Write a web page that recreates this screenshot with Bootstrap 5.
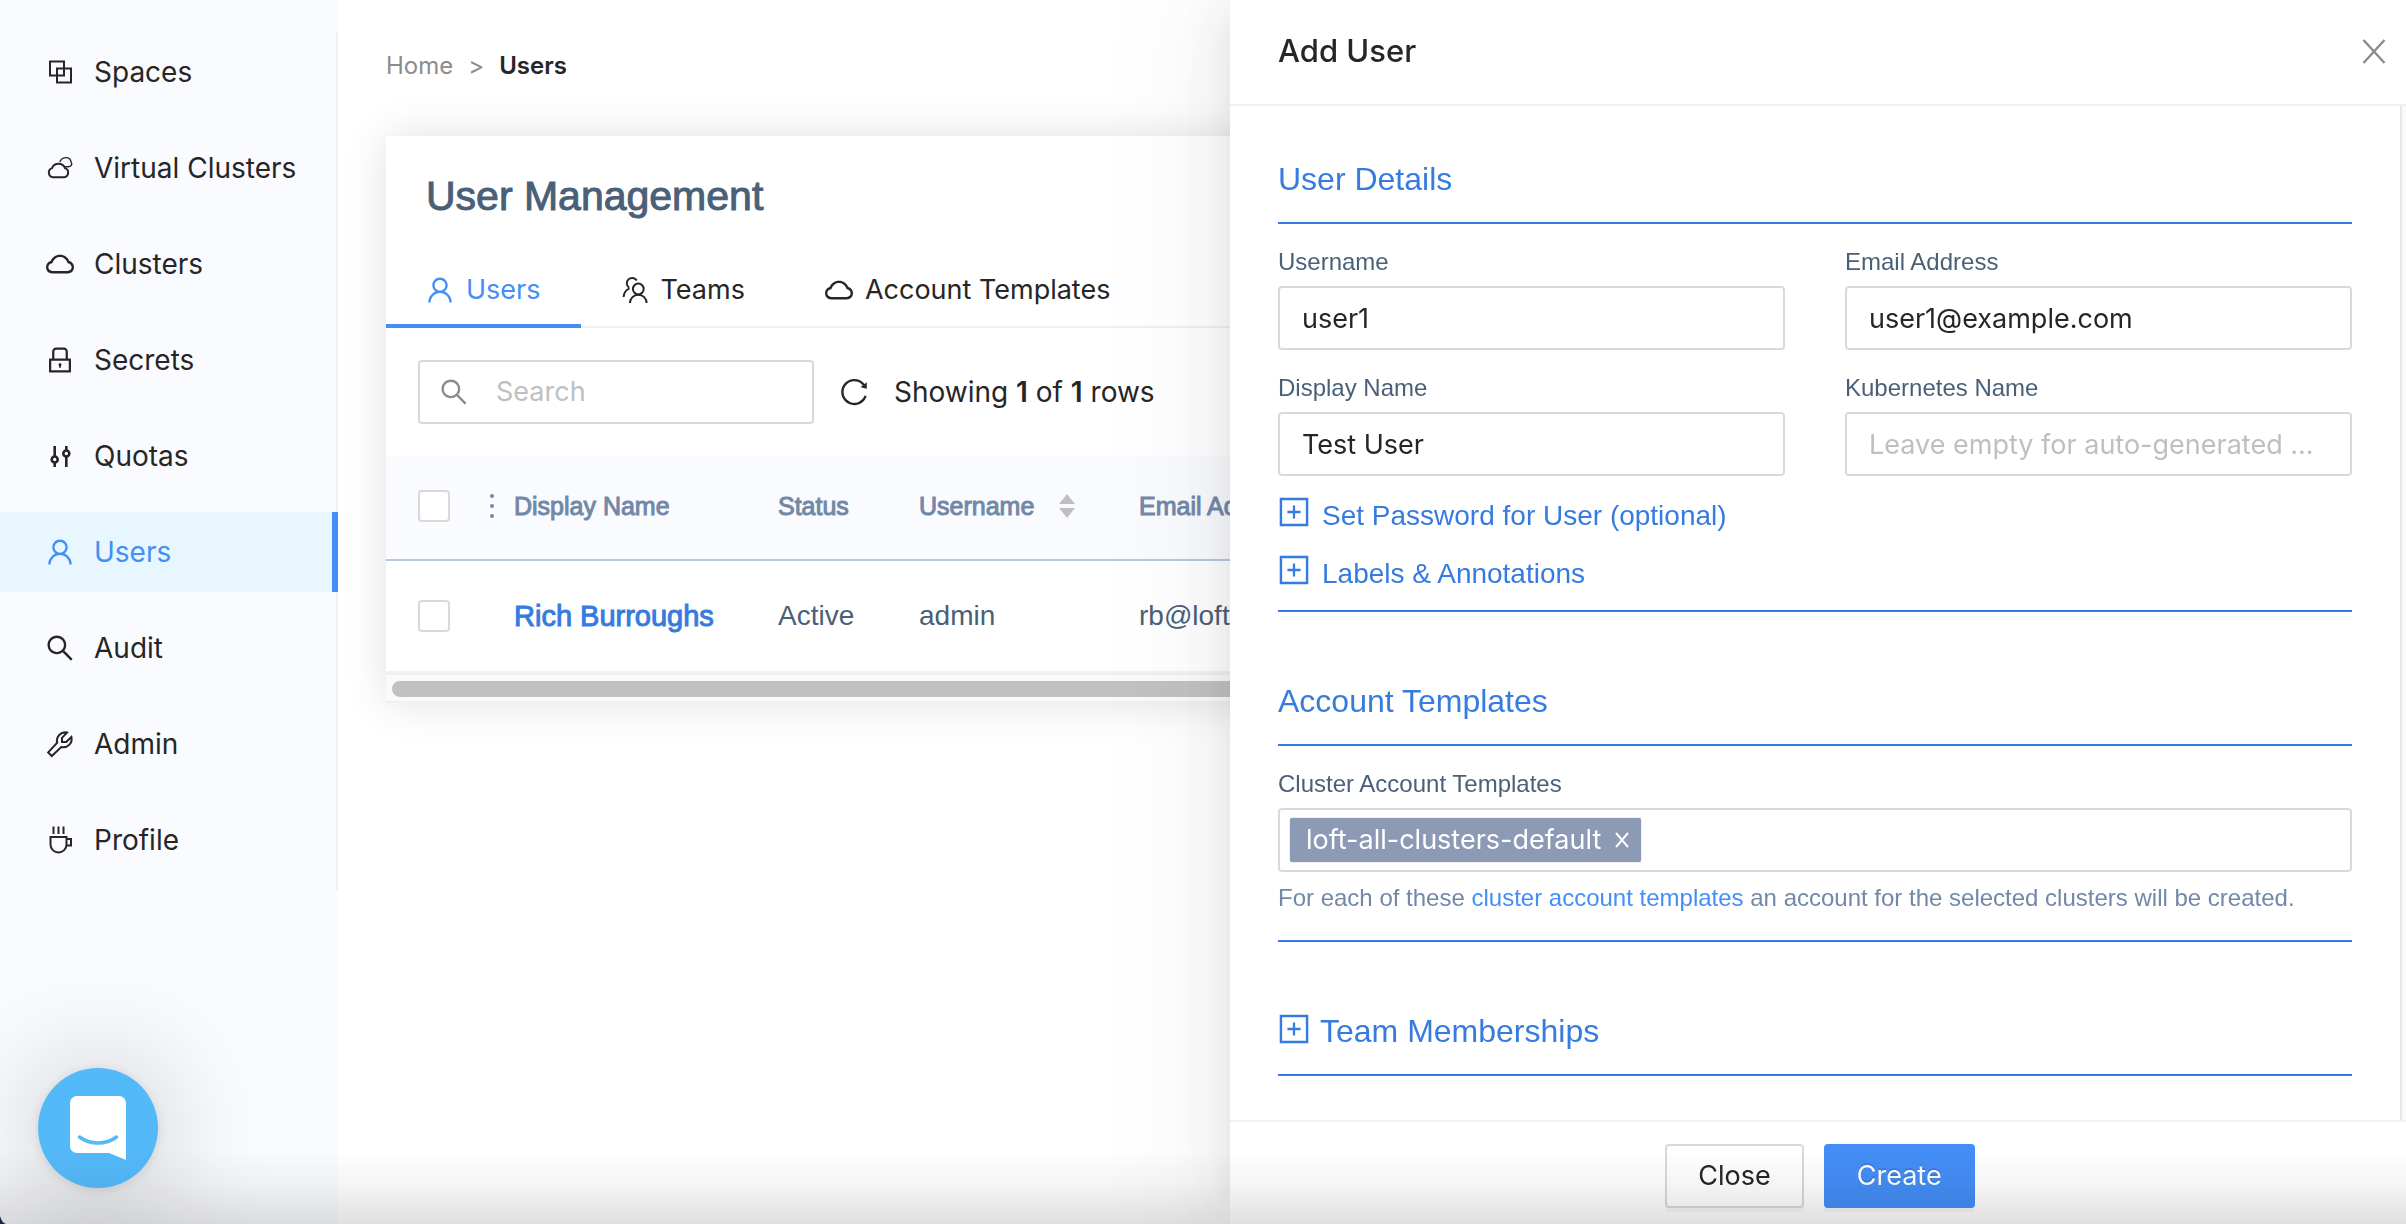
<!DOCTYPE html>
<html lang="en">
<head>
<meta charset="utf-8">
<meta name="viewport" content="width=device-width, initial-scale=1">
<title>Loft - Users</title>
<link href="https://cdn.jsdelivr.net/npm/bootstrap@5.3.0/dist/css/bootstrap.min.css" rel="stylesheet">
<style>
:root{--ui:Inter,"Liberation Sans",sans-serif;--neue:"Liberation Sans",Arial,sans-serif;--ink:#262626;--accent:#448ef7;--link:#367be0;--slate:#4a5f78;--muted:#7388a8;--line:#d9d9d9}
body{font-family:var(--ui);font-size:28px;line-height:42px;color:var(--ink);background:#fff}
svg{display:block;flex:none}
.ico{width:28px;height:28px;fill:currentColor}
.ico-lg{width:32px;height:32px;fill:currentColor}
.stroked{fill:none;stroke:currentColor;stroke-width:2}
a{color:inherit;text-decoration:none}
.sidebar{width:338px;background:#fafbff}
.side-menu{margin-top:32px;padding-bottom:10px;gap:16px;box-shadow:inset -2px 0 #f0f0f0}
.side-menu .nav-link{height:80px;padding:0 0 0 46px;gap:20px;color:var(--ink)}
.side-menu .nav-link.active{background:#e7f6ff;color:var(--accent);box-shadow:inset -6px 0 var(--accent)}
.page{padding:48px 48px 0}
.crumbs{font-size:24px;line-height:36px;gap:15px;margin-bottom:52px;color:#8c8c8c}
.crumbs .here{color:var(--ink);font-weight:600}
.panel{box-shadow:0 0 40px rgba(0,0,0,.12);background:#fff}
.panel-title{font:500 41px/60px var(--neue);color:var(--slate);-webkit-text-stroke:1px var(--slate);margin:0;padding:30px 40px 26px}
.panel-tabs{font-size:27px;box-shadow:inset 0 -2px #f0f0f0}
.panel-tabs .nav-link{height:76px;padding:0 40px;gap:12px;color:var(--ink)}
.panel-tabs .nav-link.active{color:var(--accent);box-shadow:inset 0 -4px var(--accent)}
.tools{padding:32px}
.search-box{width:396px;height:64px;border:2px solid var(--line);border-radius:4px;padding-left:20px;color:#8c8c8c;gap:28px}
.search-box .form-control{border:0;padding:0;font-size:27px;background:none;box-shadow:none}
.form-control::placeholder{color:#bfbfbf;opacity:1}
.reload{border:0;background:none;padding:0;color:inherit;margin:0 26px}
.grid-table{table-layout:fixed;width:100%;font:28px/42px var(--neue);color:var(--slate)}
.grid-table th,.grid-table td{padding:0;white-space:nowrap}
.grid-table thead tr{height:104px;background:#fafbff;color:var(--muted);font-size:25px;border-bottom:2px solid #b8c7dd}
.grid-table th{font-weight:400;-webkit-text-stroke:1px var(--muted);padding-bottom:4px}
.grid-table tbody tr{height:112px;border-bottom:2px solid #eef2f9}
.pick{padding-left:32px;gap:39px}
.pick .form-check-input{width:32px;height:32px;margin:0;border:2px solid var(--line);border-radius:4px}
.dots{width:6px;height:26px;fill:currentColor}
.person{font-size:29px;color:var(--link);-webkit-text-stroke:1px var(--link)}
.scroll-strip{border-top:2px solid #f0f0f0;border-bottom:2px solid #f0f0f0;background:#fafafa;padding:6px 6px 4px}
.scroll-thumb{height:16px;border-radius:8px;background:#c1c1c1}
.offcanvas.offcanvas-end.drawer{width:1176px;border:0;transition:none;color:var(--ink);box-shadow:-12px 0 32px -16px rgba(0,0,0,.08),-18px 0 56px rgba(0,0,0,.05),-24px 0 96px 32px rgba(0,0,0,.03)}
.drawer-head{height:106px;border-bottom:2px solid #f0f0f0;padding:0 16px 2px 48px}
.drawer-head h2{font-size:31px;line-height:44px;font-weight:500;margin:0}
.shut{border:0;background:none;padding:0;color:#8c8c8c}
.drawer-form{padding:49px 48px 0;overflow:hidden;font-family:var(--neue)}
.track{width:6px;border-left:2px solid #e8e8e8;background:#fafafa}
.group{border-bottom:2px solid var(--link)}
.group-title{font-size:32px;line-height:48px;font-weight:400;color:var(--link);margin:0;padding-bottom:19px;border-bottom:2px solid var(--link)}
.group + .group,.group + .group-title{margin-top:65px}
.fields{display:grid;grid-template-columns:1fr 1fr;gap:20px 60px;padding-top:20px}
.field-name{font-size:24px;line-height:36px;color:var(--slate);margin-bottom:6px;display:block}
.box{height:64px;border:2px solid var(--line);border-radius:4px;padding:0 22px;font:27px/42px var(--ui);color:var(--ink)}
.extras{padding:11px 0 7px}
.extras button,.group-title button{border:0;background:none;padding:0;color:var(--link);display:flex;align-items:center;gap:12px}
.group-title button{gap:10px}
.extras button{font-size:28px;line-height:58px}
.extras svg{margin-bottom:8px}
.group-title svg{margin-bottom:4px}
.tagbox{padding:0 10px}
.chip{background:#8c9ab5;color:#fff;height:44px;padding:0 10px 0 16px;gap:12px;border-radius:2px;box-shadow:0 0 0 1px #f0f0f0;line-height:44px;white-space:nowrap}
.chip button{border:0;background:none;padding:0;color:#fff}
.tagbox input{border:0;outline:0;min-width:0}
.hint{font-size:24px;line-height:36px;color:var(--muted);margin:8px 0 24px}
.hint a{color:var(--accent)}
.drawer-foot{height:104px;border-top:2px solid #eef2fa;padding:22px 0 16px 4px;gap:20px}
.drawer-foot .btn{height:64px;border-radius:4px;font-size:27px;line-height:42px;padding:0 31px;border-width:2px;box-shadow:0 4px 0 rgba(0,0,0,.03)}
.btn-close-plain{background:#fff;border-color:var(--line);color:var(--ink)}
.btn-make{background:var(--accent);border-color:var(--accent);color:#fff;text-shadow:0 -2px 0 rgba(0,0,0,.12)}
.chat{position:fixed;left:38px;bottom:36px;width:120px;height:120px;border:0;border-radius:50%;padding:0;background:#54b9f9;box-shadow:0 2px 12px rgba(0,0,0,.1),0 4px 120px rgba(0,0,0,.26);z-index:1050}
.bottom-fade{position:fixed;inset:auto 0 0 0;height:74px;background:linear-gradient(rgba(0,0,0,0),rgba(0,0,0,.04) 45%,rgba(0,0,0,.12));pointer-events:none;z-index:1060}
.corner{position:fixed;left:0;bottom:0;width:7px;height:8px;fill:#20264a;z-index:1061}
</style>
<script src="https://cdn.jsdelivr.net/npm/bootstrap@5.3.0/dist/js/bootstrap.bundle.min.js"></script>
</head>
<body class="overflow-hidden">
<svg width="0" height="0" class="position-absolute" aria-hidden="true">
  <symbol id="i-user" viewBox="64 64 896 896"><path d="M858.5 763.6a374 374 0 0 0-80.6-119.5 375.63 375.63 0 0 0-119.5-80.6c-.4-.2-.8-.3-1.2-.5C719.5 518 760 444.7 760 362c0-137-111-248-248-248S264 225 264 362c0 82.7 40.5 156 102.8 201.1-.4.2-.8.3-1.2.5-44.8 18.9-85 46-119.5 80.6a375.63 375.63 0 0 0-80.6 119.5A371.7 371.7 0 0 0 136 901.8a8 8 0 0 0 8 8.2h60c4.4 0 7.9-3.5 8-7.8 2-77.2 33-149.5 87.8-204.3 56.7-56.7 132-87.9 212.2-87.9s155.5 31.2 212.2 87.9C779 752.7 810 825 812 902.2c.1 4.4 3.6 7.8 8 7.8h60a8 8 0 0 0 8-8.2c-1-47.8-10.9-94.3-29.5-138.2zM512 534c-45.9 0-89.1-17.9-121.6-50.4S340 407.9 340 362c0-45.9 17.9-89.1 50.4-121.6S466.1 190 512 190s89.1 17.9 121.6 50.4S684 316.1 684 362c0 45.9-17.9 89.1-50.4 121.6S557.9 534 512 534z"/></symbol>
  <symbol id="i-cloud" viewBox="64 64 896 896"><path d="M811.4 418.7C765.6 297.9 648.9 212 512.2 212S258.8 297.8 213 418.6C127.3 441.1 64 519.1 64 612c0 110.5 89.5 200 199.9 200h496.2C870.5 812 960 722.5 960 612c0-92.7-63.1-170.7-148.6-193.3zm36.3 281a123.07 123.07 0 0 1-87.6 36.3H263.9c-33.1 0-64.2-12.9-87.6-36.3A123.3 123.3 0 0 1 140 612c0-28 9.1-54.3 26.2-76.3a125.7 125.7 0 0 1 66.1-43.7l37.9-9.9 13.9-36.6c8.6-22.8 20.6-44.1 35.7-63.4a245.6 245.6 0 0 1 52.4-49.9c41.1-28.9 89.5-44.2 140-44.2s98.9 15.3 140 44.2c19.9 14 37.5 30.8 52.4 49.9 15.1 19.3 27.1 40.7 35.7 63.4l13.8 36.5 37.8 10c54.3 14.5 92.1 63.8 92.1 120 0 33.1-12.9 64.3-36.3 87.7z"/></symbol>
  <symbol id="i-search" viewBox="64 64 896 896"><path d="M909.6 854.5L649.9 594.8C690.2 542.7 712 479 712 412c0-80.2-31.3-155.4-87.9-212.1-56.6-56.7-132-87.9-212.1-87.9s-155.5 31.3-212.1 87.9C143.2 256.5 112 331.8 112 412c0 80.1 31.3 155.5 87.9 212.1C256.5 680.8 331.8 712 412 712c67 0 130.6-21.8 182.7-62l259.7 259.6a8.2 8.2 0 0 0 11.6 0l43.6-43.5a8.2 8.2 0 0 0 0-11.6zM570.4 570.4C528 612.7 471.8 636 412 636s-116-23.3-158.4-65.6C211.3 528 188 471.8 188 412s23.3-116.1 65.6-158.4C296 211.3 352.2 188 412 188s116.1 23.2 158.4 65.6S636 352.2 636 412s-23.3 116.1-65.6 158.4z"/></symbol>
  <symbol id="i-lock" viewBox="64 64 896 896"><path d="M832 464h-68V240c0-70.7-57.3-128-128-128H388c-70.7 0-128 57.3-128 128v224h-68c-17.7 0-32 14.3-32 32v384c0 17.7 14.3 32 32 32h640c17.7 0 32-14.3 32-32V496c0-17.7-14.3-32-32-32zM332 240c0-30.9 25.1-56 56-56h248c30.9 0 56 25.1 56 56v224H332V240zm460 600H232V536h560v304zM484 701v53c0 4.4 3.6 8 8 8h40c4.4 0 8-3.6 8-8v-53a48.01 48.01 0 1 0-56 0z"/></symbol>
  <symbol id="i-plus" viewBox="64 64 896 896"><path d="M112 112h800v800H112zM180 180v664h664V180zM328 480h152V328h64v152h152v64H544v152h-64V544H328z" fill-rule="evenodd"/></symbol>
</svg>

<div class="d-flex vh-100">
  <aside class="sidebar flex-shrink-0">
    <nav class="side-menu nav flex-column flex-nowrap" aria-label="Main">
      <a class="nav-link d-flex align-items-center" href="#"><svg class="ico stroked" viewBox="0 0 28 28"><path d="M4 3.500h14v14H4zM11 10.500h14v14H11z"/></svg>Spaces</a>
      <a class="nav-link d-flex align-items-center" href="#"><svg class="ico stroked" viewBox="0 0 28 28"><path d="M7 23.200a4.700 4.700 0 0 1-1-9.100 7 7 0 0 1 13 0 4.700 4.700 0 0 1-1 9.100z"/><path stroke-width="1.400" d="M13.800 8C15 5 17.500 3.600 20 3.600c2.600 0 4.500 1.800 5 3.900 1.500 3 .5 5.200-3 5.200h-3"/></svg>Virtual Clusters</a>
      <a class="nav-link d-flex align-items-center" href="#"><svg class="ico"><use href="#i-cloud"/></svg>Clusters</a>
      <a class="nav-link d-flex align-items-center" href="#"><svg class="ico"><use href="#i-lock"/></svg>Secrets</a>
      <a class="nav-link d-flex align-items-center" href="#"><svg class="ico stroked" viewBox="0 0 28 28"><g stroke-width="2.600"><path d="M8.700 4v10.500M8.700 20.500V25M20.300 4v4.500M20.300 14.500V25"/><circle cx="8.700" cy="17.500" r="3"/><circle cx="20.300" cy="11.500" r="3"/></g></svg>Quotas</a>
      <a class="nav-link active d-flex align-items-center" href="#" aria-current="page"><svg class="ico"><use href="#i-user"/></svg>Users</a>
      <a class="nav-link d-flex align-items-center" href="#"><svg class="ico"><use href="#i-search"/></svg>Audit</a>
      <a class="nav-link d-flex align-items-center" href="#"><svg class="ico stroked" viewBox="0 0 28 28"><path d="M11.200 12.800A8.300 8.300 0 0 1 21 2.600L16 7.800V12h4.200l5.200-5A8.300 8.300 0 0 1 15.200 17L5.800 26 2.200 22.400z"/></svg>Admin</a>
      <a class="nav-link d-flex align-items-center" href="#"><svg class="ico stroked" viewBox="0 0 28 28"><path d="M4.500 11h16v7.500a8 8 0 0 1-16 0zM20.500 13H25v6.500h-4.500M7.500.5V8M12.500.5V8M17.500.5V8"/></svg>Profile</a>
    </nav>
  </aside>

  <main class="page flex-grow-1">
    <nav class="crumbs d-flex" aria-label="Breadcrumb"><a href="#">Home</a><span>&gt;</span><span class="here">Users</span></nav>
    <section class="panel">
      <h1 class="panel-title">User Management</h1>
      <nav class="panel-tabs nav" aria-label="User management">
        <a class="nav-link active d-flex align-items-center" href="#"><svg class="ico"><use href="#i-user"/></svg>Users</a>
        <a class="nav-link d-flex align-items-center" href="#"><svg class="ico stroked" viewBox="0 0 28 28"><circle cx="17.300" cy="13" r="5.400"/><path d="M9 27a8.300 8.300 0 0 1 16.600 0M15.800 4.500A5.400 5.400 0 1 0 8.200 11.800M2.600 21c.2-3.800 2-6.800 5.900-8.600"/></svg>Teams</a>
        <a class="nav-link d-flex align-items-center" href="#"><svg class="ico"><use href="#i-cloud"/></svg>Account Templates</a>
      </nav>
      <div class="tools d-flex align-items-center">
        <label class="search-box d-flex align-items-center"><svg class="ico"><use href="#i-search"/></svg><input class="form-control" type="search" placeholder="Search" aria-label="Search"></label>
        <button class="reload" type="button" aria-label="Reload"><svg class="ico" viewBox="64 64 896 896"><path d="M909.1 209.3l-56.4 44.1C775.8 155.1 656.2 92 521.9 92 290 92 102.3 279.5 102 511.5 101.7 743.7 289.8 932 521.900 932c181.300 0 335.800-115 394.600-276.100 1.500-4.200-.7-8.900-4.900-10.300l-56.700-19.500a8 8 0 0 0-10.100 4.800c-1.800 5-3.800 10-5.900 14.900-17.300 41-42.100 77.800-73.700 109.400A344.770 344.770 0 0 1 655.900 829c-42.300 17.900-87.400 27-133.800 27-46.500 0-91.500-9.100-133.800-27A341.500 341.500 0 0 1 279 755.200a342.160 342.160 0 0 1-73.700-109.400c-17.900-42.400-27-87.400-27-133.900s9.100-91.500 27-133.900c17.300-41 42.100-77.800 73.700-109.400 31.600-31.600 68.400-56.400 109.300-73.800 42.300-17.900 87.400-27 133.800-27 46.500 0 91.500 9.100 133.800 27a341.500 341.500 0 0 1 109.300 73.800c9.900 9.900 19.200 20.400 27.800 31.400l-60.200 47a8 8 0 0 0 3 14.100l175.600 43c5 1.200 9.900-2.600 9.900-7.700l.8-180.900c-.1-6.600-7.800-10.300-13-6.200z"/></svg></button>
        <span>Showing <b class="fw-semibold">1</b> of <b class="fw-semibold">1</b> rows</span>
      </div>
      <table class="grid-table">
        <colgroup><col width="128"><col width="264"><col width="141"><col width="220"><col></colgroup>
        <thead><tr>
          <th><div class="pick d-flex align-items-center"><input class="form-check-input" type="checkbox" aria-label="Select all"><svg class="dots" viewBox="0 0 6 26"><circle cx="3" cy="3" r="2"/><circle cx="3" cy="13" r="2"/><circle cx="3" cy="23" r="2"/></svg></div></th>
          <th scope="col">Display Name</th><th scope="col">Status</th>
          <th scope="col"><div class="d-flex align-items-center gap-4">Username<svg width="18" height="24" viewBox="0 0 18 24" fill="#bfbfbf"><path d="M9 0l8 10H1zM9 24l8-10H1z"/></svg></div></th>
          <th scope="col">Email Address</th>
        </tr></thead>
        <tbody><tr>
          <td><div class="pick d-flex"><input class="form-check-input" type="checkbox" aria-label="Select Rich Burroughs"></div></td>
          <td><a class="person" href="#">Rich Burroughs</a></td><td>Active</td><td>admin</td><td>rb@loft.sh</td>
        </tr></tbody>
      </table>
      <div class="scroll-strip"><div class="scroll-thumb"></div></div>
    </section>
  </main>
</div>

<div class="offcanvas offcanvas-end show drawer" data-bs-backdrop="false" data-bs-scroll="true" tabindex="-1" role="dialog" aria-labelledby="drawerTitle">
  <header class="drawer-head d-flex align-items-center justify-content-between flex-shrink-0">
    <h2 id="drawerTitle">Add User</h2>
    <button class="shut" type="button" aria-label="Close drawer"><svg width="32" height="32" viewBox="0 0 32 32" class="stroked"><path stroke-width="2.400" d="M5.500 5l21 23M26.500 5l-21 23"/></svg></button>
  </header>
  <div class="d-flex flex-grow-1 overflow-hidden">
    <form class="drawer-form flex-grow-1">
      <section class="group">
        <h3 class="group-title">User Details</h3>
        <div class="fields">
          <div><label class="field-name" for="username">Username</label><input class="form-control box" id="username" value="user1"></div>
          <div><label class="field-name" for="email">Email Address</label><input class="form-control box" id="email" type="email" value="user1@example.com"></div>
          <div><label class="field-name" for="display">Display Name</label><input class="form-control box" id="display" value="Test User"></div>
          <div><label class="field-name" for="kube">Kubernetes Name</label><input class="form-control box" id="kube" placeholder="Leave empty for auto-generated ..."></div>
        </div>
        <div class="extras">
          <button type="button"><svg class="ico-lg"><use href="#i-plus"/></svg>Set Password for User (optional)</button>
          <button type="button"><svg class="ico-lg"><use href="#i-plus"/></svg>Labels &amp; Annotations</button>
        </div>
      </section>
      <section class="group">
        <h3 class="group-title mb-0">Account Templates</h3>
        <div class="pt-1"><label class="field-name mt-3" for="templates">Cluster Account Templates</label>
          <div class="box tagbox d-flex align-items-center gap-2"><span class="chip d-flex align-items-center">loft-all-clusters-default<button type="button" aria-label="Remove loft-all-clusters-default"><svg width="18" height="18" viewBox="0 0 18 18" class="stroked"><path d="M3 2l12 14M15 2L3 16"/></svg></button></span><input class="flex-grow-1" id="templates"></div>
        </div>
        <p class="hint">For each of these <a href="#">cluster account templates</a> an account for the selected clusters will be created.</p>
      </section>
      <h3 class="group-title"><button type="button"><svg class="ico-lg"><use href="#i-plus"/></svg>Team Memberships</button></h3>
    </form>
    <div class="track flex-shrink-0"></div>
  </div>
  <footer class="drawer-foot d-flex justify-content-center flex-shrink-0">
    <button type="button" class="btn btn-close-plain">Close</button>
    <button type="button" class="btn btn-make">Create</button>
  </footer>
</div>

<button class="chat" type="button" aria-label="Open chat"><svg width="120" height="120" viewBox="0 0 120 120"><path fill="#fff" d="M39 28h42a7 7 0 0 1 7 7v57l-17-7H39a7 7 0 0 1-7-7V35a7 7 0 0 1 7-7z"/><path d="M41.500 69c10.500 8 26.500 8 37 0" fill="none" stroke="#54b9f9" stroke-width="3.500" stroke-linecap="round"/></svg></button>
<div class="bottom-fade"></div>
<svg class="corner" viewBox="0 0 7 8"><path d="M0 0c1 4 3 7 6 8H0z"/></svg>
</body>
</html>
